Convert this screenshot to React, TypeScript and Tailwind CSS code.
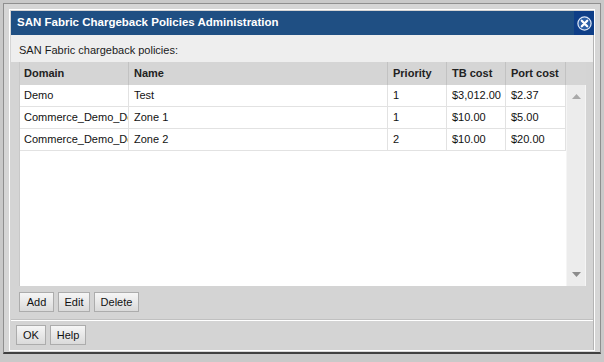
import React from 'react';

const cols = ['w-[109px]', 'w-[259px]', 'w-[59px]', 'w-[59px]', 'w-[60px]'];
const headers = ['Domain', 'Name', 'Priority', 'TB cost', 'Port cost'];

const rows = [
  ['Demo', 'Test', '1', '$3,012.00', '$2.37'],
  ['Commerce_Demo_Domain', 'Zone 1', '1', '$10.00', '$5.00'],
  ['Commerce_Demo_Domain', 'Zone 2', '2', '$10.00', '$20.00'],
];

function Btn({ label, w }: { label: string; w: string }) {
  return (
    <button
      className={`${w} h-[20px] flex items-center justify-center border border-[#acacac] bg-gradient-to-b from-[#f6f6f6] to-[#dadada] text-[11px] text-[#111]`}
    >
      {label}
    </button>
  );
}

function CloseIcon() {
  return (
    <svg width="15" height="15" viewBox="0 0 15 15">
      <circle cx="7.5" cy="7.5" r="6.6" fill="#2c5fa6" stroke="#dfe8f5" strokeWidth="1.2" />
      <path d="M4.8 4.8 L10.2 10.2 M10.2 4.8 L4.8 10.2" stroke="#ffffff" strokeWidth="2.3" strokeLinecap="round" />
    </svg>
  );
}

export default function App() {
  return (
    <div
      className="w-[604px] h-[362px] bg-[#c9c9c9] pt-[3px] px-[3px] pb-[8px]"
      style={{ fontFamily: '"Liberation Sans", Arial, sans-serif' }}
    >
      <div className="h-full border border-[#8f8f8f] border-b-2 border-b-[#404040] bg-[#d6d6d6] pt-[5px] px-[5px] pb-[1px]">
        <div className="h-full flex flex-col border border-white pl-[1px] pt-[1px] bg-[#d4d4d4]">
          {/* title bar */}
          <div className="h-[24px] flex items-center bg-[#1f4f83] shrink-0">
            <div className="flex-1 pl-[6px] text-[11.5px] font-bold text-white">
              SAN Fabric Chargeback Policies Administration
            </div>
            <div className="w-[20px] h-full flex items-center justify-center bg-[#0e3e87]">
              <CloseIcon />
            </div>
          </div>

          {/* body */}
          <div className="flex-1 flex flex-col border-r border-[#b4b4b4]">
            <div className="h-[27px] bg-[#eeeeee] pl-[8px] pt-[8px] text-[11px] text-[#1a1a1a] leading-[14px]">
              SAN Fabric chargeback policies:
            </div>

            <div className="flex-1 bg-[#d4d4d4] pl-[8px] pr-[7px] flex flex-col">
              <div className="h-[224px] flex flex-col bg-white border-l border-[#c8c8c8]">
                <div className="h-[23px] flex bg-[#d5d5d5] shrink-0">
                  {headers.map((h, i) => (
                    <div
                      key={h}
                      className={`${cols[i]} ${i === 0 ? 'pl-[4px]' : 'pl-[5px]'} border-r border-[#c2c2c2] flex items-center text-[11px] font-bold text-[#222]`}
                    >
                      {h}
                    </div>
                  ))}
                  <div className="flex-1" />
                </div>
                <div className="flex-1 flex">
                  <div className="w-[546px]">
                    {rows.map((r, ri) => (
                      <div key={ri} className="h-[22px] flex border-b border-[#e2e2e2]">
                        {r.map((c, ci) => (
                          <div
                            key={ci}
                            className={`${cols[ci]} ${ci === 0 ? 'pl-[4px]' : 'pl-[5px]'} border-r border-[#e2e2e2] flex items-center overflow-hidden whitespace-nowrap text-[11px] text-[#111]`}
                          >
                            {c}
                          </div>
                        ))}
                      </div>
                    ))}
                  </div>
                  <div className="flex-1 bg-[#ececec] border-x border-[#f5f5f5] flex flex-col items-center justify-between pt-[9px] pb-[9px]">
                    <svg width="9" height="5" viewBox="0 0 9 5">
                      <path d="M0 5 L4.5 0 L9 5 Z" fill="#a9a9a9" />
                    </svg>
                    <svg width="9" height="5" viewBox="0 0 9 5">
                      <path d="M0 0 L9 0 L4.5 5 Z" fill="#8c8c8c" />
                    </svg>
                  </div>
                </div>
              </div>

              <div className="flex gap-[4px] mt-[6px]">
                <Btn label="Add" w="w-[35px]" />
                <Btn label="Edit" w="w-[32px]" />
                <Btn label="Delete" w="w-[45px]" />
              </div>
            </div>

            <div className="h-[1px] bg-[#c0c0c0]" />
            <div className="h-[1px] bg-white" />
            <div className="h-[29px] bg-[#d4d4d4] flex gap-[4px] pl-[5px] pt-[4px]">
              <Btn label="OK" w="w-[30px]" />
              <Btn label="Help" w="w-[36px]" />
            </div>
          </div>
        </div>
      </div>
    </div>
  );
}
